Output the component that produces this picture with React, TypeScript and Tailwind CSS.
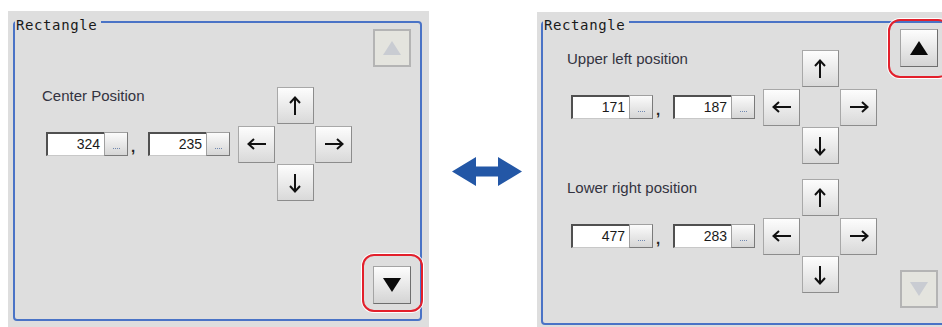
import React from 'react';

const sans = { fontFamily: '"Liberation Sans", Arial, sans-serif' };

function ArrowIcon({ dir }: { dir: 'up' | 'down' | 'left' | 'right' }) {
  const rot = { up: 0, right: 90, down: 180, left: 270 }[dir];
  return (
    <svg width="20" height="20" viewBox="0 0 20 20" style={{ transform: `rotate(${rot}deg)` }}>
      <path d="M10 1.5 V19 M5 7 L10 1.5 L15 7" fill="none" stroke="#111" strokeWidth="2" />
    </svg>
  );
}

function PadButton({ dir }: { dir: 'up' | 'down' | 'left' | 'right' }) {
  return (
    <div className="w-[37px] h-[37px] flex items-center justify-center border border-[#a8a8a8] border-r-[#8c8c8c] border-b-[#8c8c8c] bg-gradient-to-b from-[#fdfdfd] to-[#d9d9d9]">
      <ArrowIcon dir={dir} />
    </div>
  );
}

function ArrowPad() {
  return (
    <div className="grid grid-cols-[37px_37px_37px] grid-rows-[37px_37px_37px] gap-[1.5px]">
      <div />
      <PadButton dir="up" />
      <div />
      <PadButton dir="left" />
      <div />
      <PadButton dir="right" />
      <div />
      <PadButton dir="down" />
      <div />
    </div>
  );
}

function NumField({ value }: { value: string }) {
  return (
    <div className="flex h-[24px]">
      <div
        className="w-[58px] h-[24px] bg-white border-t-2 border-l-2 border-[#505050] border-b border-b-[#c8c8c8] flex items-center justify-end pr-[4px] text-[14px] text-[#1a1a1a]"
        style={sans}
      >
        {value}
      </div>
      <div className="w-[24px] h-[24px] border border-[#a0a0a0] border-r-[#7a7a7a] border-b-[#7a7a7a] bg-gradient-to-b from-[#fbfbfb] to-[#d6d6d6] flex items-end justify-center pb-[6px]">
        <span className="block w-[7px] h-0 border-t border-dotted border-[#7088b0]" />
      </div>
    </div>
  );
}

function Section({ label, x, y }: { label: string; x: string; y: string }) {
  return (
    <div className="flex items-start gap-[8px]">
      <div className="flex flex-col">
        <div className="text-[15px] leading-[18px] text-[#333340] mb-[27px]" style={sans}>
          {label}
        </div>
        <div className="flex items-end ml-[4px]">
          <NumField value={x} />
          <span className="w-[20px] pl-[3px] text-[15px] leading-[18px] font-bold text-[#222]" style={sans}>
            ,
          </span>
          <NumField value={y} />
        </div>
      </div>
      <ArrowPad />
    </div>
  );
}

function Triangle({ down, disabled }: { down?: boolean; disabled?: boolean }) {
  return (
    <svg width="18" height="14" viewBox="0 0 18 14">
      <polygon
        points={down ? '0,0 18,0 9,14' : '9,0 18,14 0,14'}
        fill={disabled ? '#c9ccd2' : '#0a0a0a'}
      />
    </svg>
  );
}

function BigButton({ down, disabled, ring, ringClass }: { down?: boolean; disabled?: boolean; ring?: boolean; ringClass?: string }) {
  return (
    <div className="relative w-[38px] h-[38px]">
      <div
        className={
          disabled
            ? 'w-full h-full flex items-center justify-center bg-[#e4e4de] border-2 border-[#b4b4b4]'
            : 'w-full h-full flex items-center justify-center border border-[#a4a4a4] border-r-[#6e6e6e] border-b-[#6e6e6e] bg-gradient-to-b from-[#fdfdfd] to-[#d4d4d4]'
        }
      >
        <Triangle down={down} disabled={disabled} />
      </div>
      {ring && (
        <div className={`absolute border-2 border-[#e3202c] rounded-[12px] shadow-[0_0_0_1px_#ffffff] ${ringClass}`} />
      )}
    </div>
  );
}

function Legend() {
  return (
    <span
      className="absolute top-[-6px] left-0 pl-[1px] pr-[4px] bg-[#dedede] text-[14px] leading-[16px] tracking-[0.6px] text-[#1a1a1a]"
      style={{ fontFamily: '"DejaVu Sans Mono", monospace' }}
    >
      Rectangle
    </span>
  );
}

export default function App() {
  return (
    <div className="w-[942px] h-[327px] overflow-hidden bg-white flex items-start">
      {/* Left panel */}
      <div className="ml-[8px] mt-[11px] w-[421px] h-[316px] shrink-0 bg-[#dedede] pl-[5px] pt-[10px]">
        <div className="relative w-[409px] h-[300px] border-2 border-[#4a73c6] rounded-[4px] flex">
          <Legend />
          <div className="flex-1 pl-[27px] pt-[64px]">
            <Section label="Center Position" x="324" y="235" />
          </div>
          <div className="flex flex-col justify-between pt-[6px] pb-[15px] pr-[9px]">
            <BigButton disabled />
            <BigButton down ring ringClass="-left-[11px] -right-[12px] -top-[12px] -bottom-[8px]" />
          </div>
        </div>
      </div>

      {/* Double arrow */}
      <div className="ml-[23px] mt-[157px] shrink-0">
        <svg width="70" height="29" viewBox="0 0 70 29">
          <polygon
            points="0,14.5 24,0 24,9.5 46,9.5 46,0 70,14.5 46,29 46,19.5 24,19.5 24,29"
            fill="#2357a6"
          />
        </svg>
      </div>

      {/* Right panel */}
      <div className="ml-[15px] mt-[12px] w-[420px] h-[315px] shrink-0 bg-[#dedede] pl-[4px] pt-[9px]">
        <div className="relative w-[409px] h-[304px] border-2 border-[#4a73c6] rounded-[4px] flex">
          <Legend />
          <div className="flex-1 pl-[24px] pt-[27px] flex flex-col gap-[15px]">
            <Section label="Upper left position" x="171" y="187" />
            <Section label="Lower right position" x="477" y="283" />
          </div>
          <div className="flex flex-col justify-between pt-[6px] pb-[15px] pr-[10px]">
            <BigButton ring ringClass="-left-[12px] -right-[12px] -top-[10px] -bottom-[11px]" />
            <BigButton down disabled />
          </div>
        </div>
      </div>
    </div>
  );
}
